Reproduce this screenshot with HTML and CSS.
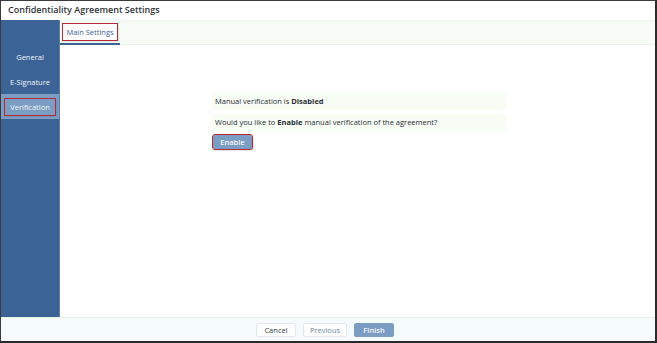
FILE: index.html
```
<!doctype html>
<html>
  <head>
    <meta charset='utf-8'>
    <title>Confidentiality Agreement Settings</title>
    <link rel="stylesheet" href="styles.css">
  </head>
  <body>
    <div class="frame">
      <div class="title">Confidentiality Agreement Settings</div>

      <div class="main">
        <ul class="sidebar">
          <li>General</li>
          <li>E-Signature</li>
          <li class="active"><span class="mark">Verification</span></li>
        </ul>

        <div class="content">
          <div class="tabs">
            <div class="tab"><span class="mark">Main Settings</span></div>
          </div>

          <div class="panel">
            <div class="row">Manual verification is <b>Disabled</b></div>
            <div class="row">Would you like to <b>Enable</b> manual verification of the agreement?</div>
            <button class="btn primary enable">Enable</button>
          </div>
        </div>
      </div>

      <div class="footer">
        <button class="btn">Cancel</button>
        <button class="btn muted">Previous</button>
        <button class="btn primary">Finish</button>
      </div>
    </div>
  </body>
</html>
```

FILE: styles.css
```
body {
  margin: 0;
  font-family: 'Open Sans', 'DejaVu Sans', sans-serif;
  color: #2b2f36;
}

.frame {
  width: 657px;
  height: 343px;
  box-sizing: border-box;
  border-top: 1px solid #3a3a3a;
  border-left: 1px solid #3a3a3a;
  border-right: 2px solid #2a2a2a;
  border-bottom: 2px solid #2a2a2a;
  display: flex;
  flex-direction: column;
  background: #fff;
}

.title {
  height: 19px;
  line-height: 18px;
  padding-left: 7px;
  font-size: 9px;
  font-weight: 600;
  color: #2f3338;
}

.main {
  flex: 1;
  display: flex;
}

.sidebar {
  list-style: none;
  margin: 0;
  padding: 24px 0 0;
  width: 58px;
  background: #3b6395;
  border-right: 1px solid #5d7fa9;
}

.sidebar li {
  height: 25px;
  display: flex;
  align-items: center;
  justify-content: center;
  font-size: 7.5px;
  color: #f2f5fa;
}

.sidebar li.active {
  background: #7b9dc4;
}

.mark {
  outline: 1px solid #b52834;
  box-shadow: 1px 1px 2px rgba(0, 0, 0, .25);
}

.sidebar .mark {
  padding: 3px 5px;
}

.content {
  flex: 1;
  display: flex;
  flex-direction: column;
}

.tabs {
  height: 23px;
  background: #f6fbf6;
  border-top: 1px solid #eef4f4;
  border-bottom: 1px solid #edf2f2;
  display: flex;
}

.tab {
  width: 60px;
  display: flex;
  align-items: center;
  justify-content: center;
  border-bottom: 2px solid #3b6395;
  margin-bottom: -1px;
  font-size: 7.5px;
  color: #3b6395;
}

.tab .mark {
  padding: 3px 3px;
  background: #fff;
}

.panel {
  width: 294px;
  margin: 48px 0 0 152px;
  display: flex;
  flex-direction: column;
  align-items: flex-start;
  gap: 4px;
}

.row {
  align-self: stretch;
  height: 17px;
  line-height: 17px;
  padding-left: 3px;
  background: #f7fcf5;
  font-size: 7.5px;
  color: #2b2f36;
}

.btn {
  font-family: inherit;
  font-size: 7.5px;
  height: 14px;
  padding: 0;
  border: 1px solid #e3e8ee;
  border-radius: 2px;
  background: #fff;
  color: #3a3f46;
}

.btn.primary {
  background: #7b9dc4;
  border-color: #7b9dc4;
  color: #f4f7fb;
  font-weight: 600;
}

.btn.muted {
  color: #6f87a3;
}

.enable {
  width: 39px;
  margin-left: 1px;
  background: #6a92bd;
  border-color: #6a92bd;
  outline: 1px solid #b52834;
  box-shadow: 1px 1px 2px rgba(0, 0, 0, .3);
}

.footer {
  height: 23px;
  background: #f5fbfb;
  border-top: 1px solid #e6eeee;
  display: flex;
  align-items: center;
  justify-content: center;
  gap: 7px;
  padding-right: 6px;
}

.footer .btn {
  width: 40px;
}

.footer .btn.muted {
  width: 44px;
}
```
